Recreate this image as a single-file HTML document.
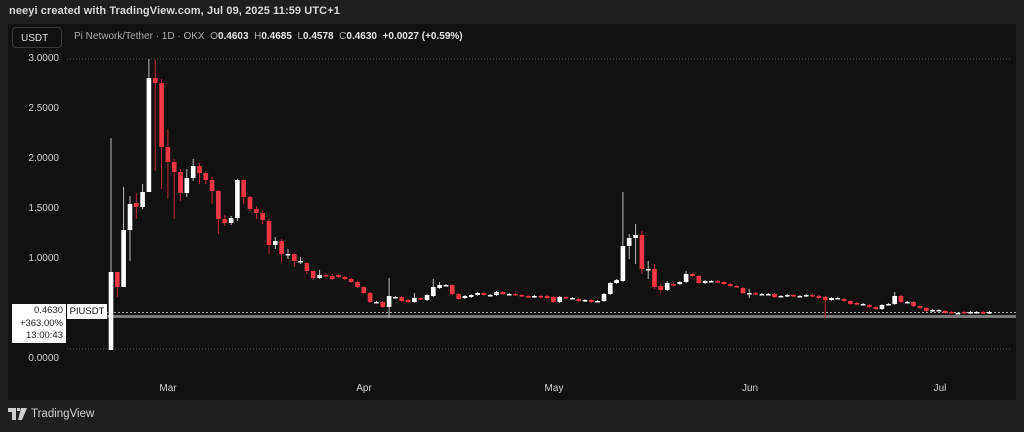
<!DOCTYPE html>
<html><head><meta charset="utf-8">
<style>
html,body{margin:0;padding:0;background:#1f1f1f;width:1024px;height:432px;overflow:hidden;font-family:"Liberation Sans",sans-serif;}
#hdr{position:absolute;left:9px;top:5px;font-size:11px;color:#d8d8d8;font-weight:bold;letter-spacing:0.1px}
#panel{position:absolute;left:8px;top:24px;width:1008px;height:376px;background:#111111;}
svg{position:absolute;left:0;top:0}
#usdt{position:absolute;left:12px;top:27px;width:50px;height:21px;border:1px solid #3a3a3a;border-radius:4px;color:#e0e0e0;font-size:10px;line-height:21px;text-indent:8px;box-sizing:border-box}
#title{position:absolute;left:74px;top:31px;font-size:10px;color:#aaa}
#title b{color:#e6e6e6;font-weight:bold}
.yl{position:absolute;width:50px;left:9px;text-align:right;font-size:10px;color:#cfcfcf}
.ml{position:absolute;top:383px;font-size:10px;color:#cfcfcf;transform:translateX(-50%)}
#lbl{position:absolute;left:12px;top:304px;width:54px;height:39px;background:#fff;color:#222;font-size:9.5px;text-align:right;line-height:12.5px;box-sizing:border-box;padding:1px 3px 0 0}
#sym{position:absolute;left:67px;top:304px;width:40px;height:15px;background:#fff;color:#111;font-size:9.5px;line-height:15px;text-align:center}
#foot{position:absolute;left:8px;top:408px;font-size:11.5px;color:#d0d0d0;display:flex;align-items:center;gap:3px}
</style></head><body>
<div id="hdr">neeyi created with TradingView.com, Jul 09, 2025 11:59 UTC+1</div>
<div id="panel"></div>
<svg id="ch" width="1024" height="432"></svg>
<div id="usdt">USDT</div>
<div id="title">Pi Network/Tether · 1D · OKX &nbsp;O<b>0.4603</b> &nbsp;H<b>0.4685</b> &nbsp;L<b>0.4578</b> &nbsp;C<b>0.4630</b> &nbsp;<b>+0.0027 (+0.59%)</b></div>
<div class="yl" style="top:53px">3.0000</div>
<div class="yl" style="top:103px">2.5000</div>
<div class="yl" style="top:153px">2.0000</div>
<div class="yl" style="top:203px">1.5000</div>
<div class="yl" style="top:253px">1.0000</div>
<div class="yl" style="top:353px">0.0000</div>
<div class="ml" style="left:168px">Mar</div>
<div class="ml" style="left:364px">Apr</div>
<div class="ml" style="left:554px">May</div>
<div class="ml" style="left:750px">Jun</div>
<div class="ml" style="left:940px">Jul</div>
<div id="lbl">0.4630<br>+363.00%<br>13:00:43</div>
<div id="sym">PIUSDT</div>
<div id="foot"><svg width="20" height="12" viewBox="0 0 20 12" style="position:static"><path d="M0 0h8v12h-4v-8h-4z M9 0h3v3h-3z M13 0h6l-5 12h-4z" fill="#d0d0d0"/></svg><span>TradingView</span></div>
<script>
var A=[[0.09,0.87,2.21,0.09],[0.87,0.72,0.87,0.62],[0.72,1.29,1.72,0.72],[1.29,1.55,1.63,0.98],[1.56,1.52,1.66,1.40],[1.52,1.67,1.75,1.50],[1.67,2.81,3.0,1.67],[2.81,2.76,2.99,1.88],[2.76,2.12,2.8,1.7],[2.12,1.97,2.3,1.6],[1.97,1.87,2.0,1.4],[1.87,1.66,1.9,1.58],[1.66,1.81,1.9,1.62],[1.81,1.93,2.0,1.78],[1.93,1.86,1.96,1.75],[1.86,1.79,1.88,1.75],[1.79,1.68,1.82,1.55],[1.68,1.40,1.69,1.25],[1.40,1.36,1.44,1.33],[1.36,1.41,1.43,1.34],[1.41,1.79,1.80,1.38],[1.79,1.62,1.80,1.55],[1.62,1.50,1.63,1.48],[1.50,1.46,1.53,1.40],[1.46,1.39,1.48,1.35],[1.38,1.14,1.40,1.05],[1.14,1.18,1.22,1.10],[1.18,1.05,1.20,0.97],[1.05,1.05,1.10,1.0],[1.05,0.98,1.06,0.92],[0.98,0.98,1.02,0.95],[0.96,0.88,0.97,0.85],[0.88,0.81,0.88,0.79],[0.81,0.84,0.89,0.80],[0.84,0.83,0.86,0.81],[0.83,0.80,0.85,0.79],
[0.84,0.82],[0.82,0.80],[0.80,0.77],[0.77,0.72],[0.72,0.66],[0.66,0.57],[0.57,0.57],[0.57,0.52],[0.52,0.63,0.81,0.41],[0.62,0.62],[0.62,0.58],[0.59,0.57],[0.57,0.61,0.66,0.56],[0.61,0.60],[0.59,0.64],[0.63,0.72,0.80,0.62],[0.71,0.74,0.77,0.70],[0.74,0.74],[0.74,0.65],[0.65,0.60],[0.61,0.63],[0.62,0.64],[0.64,0.66],[0.66,0.64],[0.64,0.64],[0.64,0.67],[0.67,0.65],[0.65,0.65],[0.65,0.64],[0.64,0.63],[0.63,0.62],[0.62,0.63],[0.63,0.62],[0.63,0.61],[0.62,0.57],[0.57,0.62],[0.62,0.61],[0.61,0.61],[0.60,0.58],[0.58,0.59],[0.59,0.57],[0.58,0.58],[0.58,0.65],[0.65,0.76],[0.76,0.79],[0.78,1.13,1.67,0.77],[1.13,1.21,1.25,1.0],[1.21,1.24,1.35,0.95],[1.24,0.90,1.28,0.85],[0.90,0.90,0.98,0.80],[0.90,0.72,0.95,0.70],[0.73,0.69,0.75,0.66],[0.69,0.76,0.78,0.68],[0.75,0.74],[0.75,0.77],[0.77,0.85,0.88,0.76],
[0.85,0.83],[0.83,0.76],[0.76,0.78],[0.78,0.78],[0.78,0.77],[0.77,0.75],[0.75,0.73],[0.73,0.72],[0.71,0.66],[0.66,0.66,0.70,0.61],[0.66,0.65],[0.65,0.65],[0.65,0.65],[0.65,0.62],[0.63,0.63],[0.63,0.64],[0.64,0.63],[0.63,0.63],[0.63,0.64],[0.64,0.63],[0.63,0.61],[0.62,0.59,0.63,0.41],[0.59,0.61],[0.61,0.61],[0.60,0.58],[0.58,0.55],[0.56,0.55],[0.55,0.55],[0.54,0.52],[0.52,0.50],[0.50,0.54],[0.55,0.55],[0.55,0.63,0.67,0.54],[0.63,0.57],[0.57,0.57],[0.57,0.53],[0.53,0.51],[0.51,0.48],[0.48,0.49],[0.49,0.49],[0.48,0.46],[0.47,0.46],[0.46,0.46],[0.47,0.46],[0.46,0.47],[0.47,0.47],[0.47,0.46],[0.46,0.47]];
var s='<line x1="67" y1="59" x2="1010" y2="59" stroke="#555" stroke-dasharray="1,2"/>';
s+='<line x1="67" y1="349" x2="1010" y2="349" stroke="#555" stroke-dasharray="1,2"/>';
s+='<rect x="106" y="315" width="910" height="3" fill="#7a7a7a"/>';
s+='<line x1="106" y1="312.5" x2="1016" y2="312.5" stroke="#aaa" stroke-dasharray="2,2"/>';
var step=6.32;
function Y(p){return 359-100*p;}
A.forEach(function(d,i){
 var o=d[0],c=d[1],h=d.length>2?d[2]:Math.max(o,c)+0.01,l=d.length>2?d[3]:Math.min(o,c)-0.01;
 var x=111+i*step,up=c>=o,col=up?'#ffffff':'#f23645',wc=up?'#bbbbbb':'#c22636';
 s+='<line x1="'+x.toFixed(1)+'" y1="'+Y(h)+'" x2="'+x.toFixed(1)+'" y2="'+Y(l)+'" stroke="'+wc+'" stroke-width="1"/>';
 var t=Y(Math.max(o,c)),b=Y(Math.min(o,c));if(b-t<1.5){b=t+1.5;}
 s+='<rect x="'+(x-2.3).toFixed(1)+'" y="'+t+'" width="4.6" height="'+(b-t).toFixed(1)+'" fill="'+col+'"/>';
});
document.getElementById('ch').innerHTML=s;
</script>
</body></html>
